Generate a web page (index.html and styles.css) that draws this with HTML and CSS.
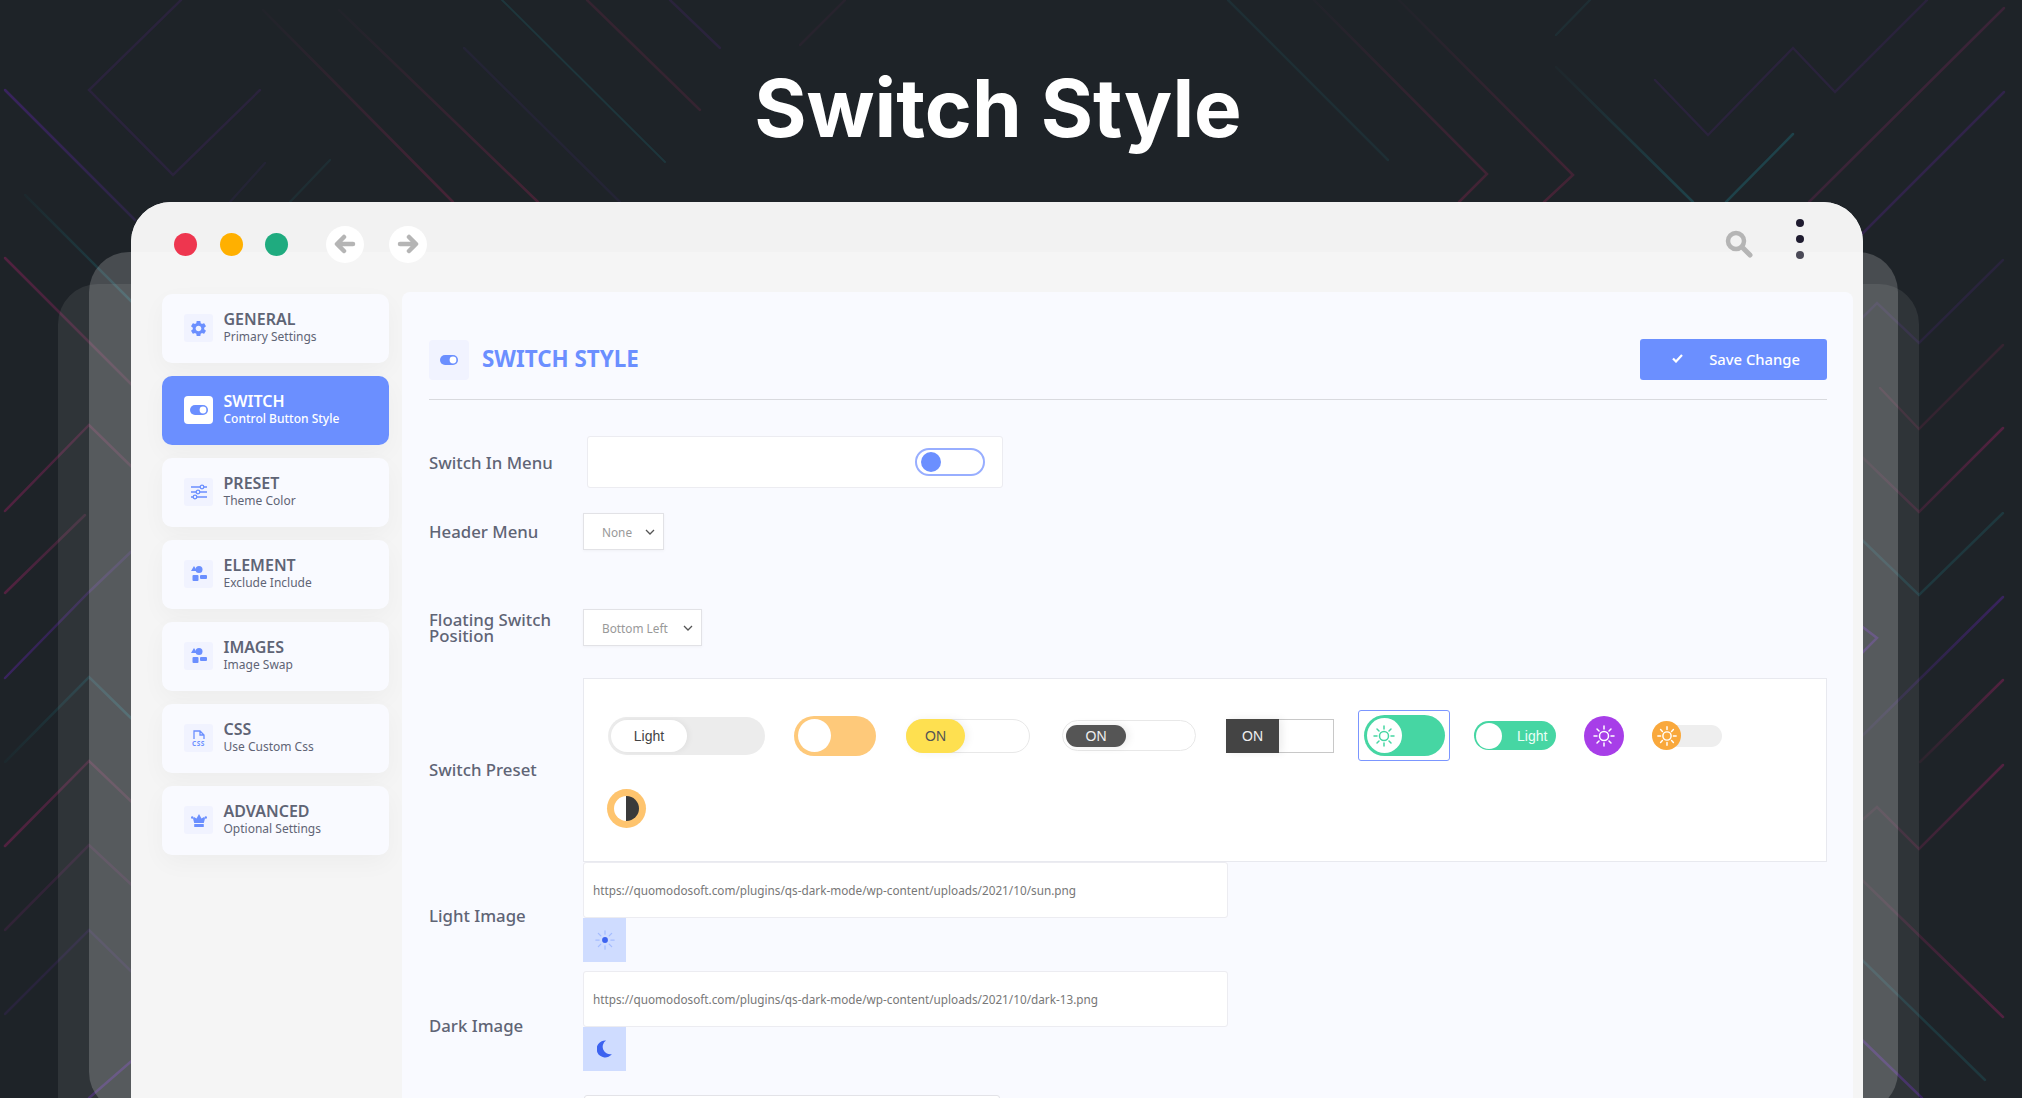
FILE: index.html
```html
<!DOCTYPE html>
<html lang="en">
<head>
  <meta charset="UTF-8" />
  <title>Switch Style</title>
  <link rel="stylesheet" href="styles.css">
</head>
<body>
  <div class="page">
    <!-- background line pattern -->
    <svg class="bg-lines" width="2022" height="1098" viewBox="0 0 2022 1098" fill="none" stroke-width="2.500" stroke-linecap="round" stroke-linejoin="miter">
      <defs>
        <linearGradient id="redL" x1="0" y1="0" x2="1" y2="0"><stop offset="0" stop-color="#5c2145"/><stop offset="1" stop-color="#3f2a3a"/></linearGradient>
        <linearGradient id="redR" x1="1" y1="0" x2="0" y2="0"><stop offset="0" stop-color="#5c2145"/><stop offset="1" stop-color="#2e252f"/></linearGradient>
        <linearGradient id="redT" x1="0" y1="1" x2="0" y2="0"><stop offset="0" stop-color="#4d2439"/><stop offset="1" stop-color="#22242b"/></linearGradient>
        <linearGradient id="purL" x1="0" y1="0" x2="1" y2="0"><stop offset="0" stop-color="#3e2468"/><stop offset="1" stop-color="#2e2648"/></linearGradient>
        <linearGradient id="purR" x1="1" y1="0" x2="0" y2="0"><stop offset="0" stop-color="#3e2468"/><stop offset="1" stop-color="#262538"/></linearGradient>
        <linearGradient id="tealL" x1="0" y1="0" x2="1" y2="0"><stop offset="0" stop-color="#1c2a2f"/><stop offset="1" stop-color="#1f4850"/></linearGradient>
        <linearGradient id="tealT" x1="0" y1="1" x2="0" y2="0"><stop offset="0" stop-color="#1f4850"/><stop offset="1" stop-color="#1e282d"/></linearGradient>
      </defs>
      <!-- top left -->
      <polyline points="5,90 135,220" stroke="url(#purL)" />
      <polyline points="181,0 89,90 173,175 260,90" stroke="#2d2340" />
      <polyline points="25,195 135,305" stroke="url(#tealL)" />
      <polyline points="5,258 135,388" stroke="url(#redL)" />
      <polyline points="263,10 453,202" stroke="url(#redT)" />
      <polyline points="339,10 538,202" stroke="url(#redT)" />
      <polyline points="502,0 665,162" stroke="#1e3a40" stroke-width="2" />
      <polyline points="464,48 620,202" stroke="#262538" />
      <polyline points="587,0 700,110" stroke="#3a2533" />
      <polyline points="670,0 720,48" stroke="#2d2340" />
      <polyline points="265,163 230,202" stroke="#262538" />
      <polyline points="330,160 290,202" stroke="#1e3036" />
      <polyline points="800,45 845,0" stroke="#2a2430" />
      <polyline points="1228,0 1388,160" stroke="#1f3238" />
      <!-- top right -->
      <polyline points="1314,0 1487,174 1459,202" stroke="url(#redT)" />
      <polyline points="1399,0 1573,175 1544,202" stroke="url(#redT)" />
      <polyline points="1590,0 1556,35" stroke="#1e3036" />
      <polyline points="1556,67 1693,202" stroke="url(#tealT)" />
      <polyline points="1793,134 1726,202" stroke="#1f4850" />
      <polyline points="1655,80 1708,135 1793,48 1835,92 1927,0" stroke="#2d2340" />
      <polyline points="2004,8 1809,202" stroke="#40253b" />
      <polyline points="2004,92 1860,236" stroke="#352350" />
      <!-- left edge -->
      <polyline points="5,511 89,425 135,470" stroke="url(#redL)" />
      <polyline points="5,593 85,515" stroke="url(#redL)" />
      <polyline points="5,678 89,592 135,548" stroke="url(#purL)" />
      <polyline points="5,762 89,677 135,722" stroke="url(#tealL)" />
      <polyline points="5,846 89,761 135,805" stroke="url(#redL)" />
      <polyline points="5,930 89,845 135,888" stroke="#35243a" />
      <polyline points="5,1014 89,930 135,975" stroke="#2b2540" />
      <polyline points="89,1098 135,1058" stroke="#3e2468" />
      <!-- right edge -->
      <polyline points="2003,260 1919,343 1877,303 1860,320" stroke="#2b2540" />
      <polyline points="2003,345 1919,429 1880,388" stroke="#3a2533" />
      <polyline points="2003,428 1919,512 1860,455" stroke="url(#redR)" />
      <polyline points="2003,513 1919,595 1860,538" stroke="#1f3c42" />
      <polyline points="2003,597 1860,738" stroke="url(#purR)" />
      <polyline points="1860,625 1877,638 1860,655" stroke="#3e2468" />
      <polyline points="2003,680 1920,762" stroke="url(#redR)" />
      <polyline points="2003,765 1919,849 1877,807 1860,822" stroke="url(#redR)" />
      <polyline points="2003,1017 1860,878" stroke="url(#redR)" />
      <polyline points="1860,958 1985,1080" stroke="#1f3c42" />
      <polyline points="1860,1038 1922,1098" stroke="#3e2468" />
    </svg>

    <h1 class="page-title">Switch Style</h1>

    <div class="layer layer-back"></div>
    <div class="layer layer-mid"></div>

    <div class="window">
      <div class="window-bar">
        <span class="light light-red"></span>
        <span class="light light-orange"></span>
        <span class="light light-green"></span>
        <span class="nav-btn nav-back">
          <svg width="22" height="20" viewBox="0 0 22 20" fill="none" stroke="#b5b5b5" stroke-width="4.500" stroke-linecap="round" stroke-linejoin="round"><path d="M19 10H4M10 3l-7 7 7 7"/></svg>
        </span>
        <span class="nav-btn">
          <svg width="22" height="20" viewBox="0 0 22 20" fill="none" stroke="#b5b5b5" stroke-width="4.500" stroke-linecap="round" stroke-linejoin="round"><path d="M3 10h15M12 3l7 7-7 7"/></svg>
        </span>
        <svg class="search-icon" width="28" height="28" viewBox="0 0 28 28" fill="none" stroke="#b5b5b5" stroke-linecap="round"><circle cx="11" cy="11" r="8" stroke-width="4.500"/><path d="M17 17l8 8" stroke-width="5"/></svg>
        <span class="dots"><i></i><i></i><i class="dot-soft"></i></span>
      </div>

      <div class="window-body">
        <nav class="side-nav">
          <a class="nav-item">
            <span class="nav-icon">
              <svg width="19" height="19" viewBox="0 0 24 24" fill="#6b8fff"><path d="M19.14 12.94c.04-.3.06-.61.06-.94 0-.32-.02-.64-.07-.94l2.03-1.58c.18-.14.23-.41.12-.61l-1.92-3.32c-.12-.22-.37-.29-.59-.22l-2.39.96c-.5-.38-1.03-.7-1.62-.94l-.36-2.54c-.04-.24-.24-.41-.48-.41h-3.84c-.24 0-.43.17-.47.41l-.36 2.54c-.59.24-1.13.57-1.62.94l-2.39-.96c-.22-.08-.47 0-.59.22L2.74 8.87c-.12.21-.08.47.12.61l2.03 1.58c-.05.3-.09.63-.09.94s.02.64.07.94l-2.03 1.58c-.18.14-.23.41-.12.61l1.92 3.32c.12.22.37.29.59.22l2.39-.96c.5.38 1.03.7 1.62.94l.36 2.54c.05.24.24.41.48.41h3.84c.24 0 .44-.17.47-.41l.36-2.54c.59-.24 1.13-.56 1.62-.94l2.39.96c.22.08.47 0 .59-.22l1.92-3.32c.12-.22.07-.47-.12-.61l-2.01-1.58zM12 15.6c-1.98 0-3.6-1.62-3.6-3.6s1.62-3.6 3.6-3.6 3.6 1.62 3.6 3.6-1.62 3.6-3.6 3.6z"/></svg>
            </span>
            <span class="nav-text"><b>GENERAL</b><small>Primary Settings</small></span>
          </a>
          <a class="nav-item nav-item-active">
            <span class="nav-icon">
              <svg width="18" height="10" viewBox="0 0 18 10"><rect width="18" height="10" rx="5" fill="#6b8fff"/><circle cx="13" cy="5" r="3.400" fill="#fff"/></svg>
            </span>
            <span class="nav-text"><b>SWITCH</b><small>Control Button Style</small></span>
          </a>
          <a class="nav-item">
            <span class="nav-icon">
              <svg width="16" height="16" viewBox="0 0 16 16" fill="#f4f6ff" stroke="#6b8fff" stroke-width="1.300"><path d="M0 3h16M0 8h16M0 13h16"/><circle cx="11" cy="3" r="1.800"/><circle cx="7" cy="8" r="1.800"/><circle cx="4" cy="13" r="1.800"/></svg>
            </span>
            <span class="nav-text"><b>PRESET</b><small>Theme Color</small></span>
          </a>
          <a class="nav-item">
            <span class="nav-icon">
              <svg width="16" height="16" viewBox="0 0 16 16" fill="#6b8fff"><path d="M3 0l3 5H0z"/><circle cx="8" cy="3.500" r="3.500"/><rect x="1.500" y="9" width="6" height="6" rx="1"/><rect x="9" y="9" width="7" height="4" rx="1"/></svg>
            </span>
            <span class="nav-text"><b>ELEMENT</b><small>Exclude Include</small></span>
          </a>
          <a class="nav-item">
            <span class="nav-icon">
              <svg width="16" height="16" viewBox="0 0 16 16" fill="#6b8fff"><path d="M3 0l3 5H0z"/><circle cx="8" cy="3.500" r="3.500"/><rect x="1.500" y="9" width="6" height="6" rx="1"/><rect x="9" y="9" width="7" height="4" rx="1"/></svg>
            </span>
            <span class="nav-text"><b>IMAGES</b><small>Image Swap</small></span>
          </a>
          <a class="nav-item">
            <span class="nav-icon nav-icon-css">
              <svg width="12" height="10" viewBox="0 0 12 10" fill="none" stroke="#6b8fff" stroke-width="1.300"><path d="M1 9V1h6l4 4v4M7 1v4h4"/></svg>
              <em>CSS</em>
            </span>
            <span class="nav-text"><b>CSS</b><small>Use Custom Css</small></span>
          </a>
          <a class="nav-item">
            <span class="nav-icon">
              <svg width="16" height="13" viewBox="0 0 16 13" fill="#6b8fff"><path d="M8 0l2.500 4.500L13 3l1 1.500L12.800 9H3.200L2 4.500 3 3l2.500 1.500z"/><circle cx="1.200" cy="3.500" r="1.200"/><circle cx="14.800" cy="3.500" r="1.200"/><rect x="3.200" y="10" width="9.600" height="3" rx=".5"/></svg>
            </span>
            <span class="nav-text"><b>ADVANCED</b><small>Optional Settings</small></span>
          </a>
        </nav>

        <main class="panel">
          <header class="panel-head">
            <span class="panel-icon">
              <svg width="18" height="10" viewBox="0 0 18 10"><rect width="18" height="10" rx="5" fill="#6b8fff"/><circle cx="13" cy="5" r="3.400" fill="#fff"/></svg>
            </span>
            <h2>SWITCH STYLE</h2>
            <button class="save-btn" type="button">
              <svg width="11" height="9" viewBox="0 0 11 9" fill="none" stroke="#fff" stroke-width="2.200"><path d="M1 4.500l3 3 6-6.500"/></svg>
              Save Change
            </button>
          </header>

          <div class="row row-menu">
            <label>Switch In Menu</label>
            <div class="toggle-box"><span class="toggle"><i></i></span></div>
          </div>

          <div class="row row-header">
            <label>Header Menu</label>
            <div class="select select-none">None
              <svg width="10" height="6" viewBox="0 0 10 6" fill="none" stroke="#555" stroke-width="1.300"><path d="M1 1l4 4 4-4"/></svg>
            </div>
          </div>

          <div class="row row-floating">
            <label>Floating Switch Position</label>
            <div class="select select-pos">Bottom Left
              <svg width="10" height="6" viewBox="0 0 10 6" fill="none" stroke="#555" stroke-width="1.300"><path d="M1 1l4 4 4-4"/></svg>
            </div>
          </div>

          <div class="row row-preset">
            <label>Switch Preset</label>
            <div class="preset-box">
              <span class="sw sw-light"><i>Light</i></span>
              <span class="sw sw-orange"><i></i></span>
              <span class="sw sw-yellow"><i>ON</i></span>
              <span class="sw sw-dark"><i>ON</i></span>
              <span class="sw sw-square"><i>ON</i></span>
              <span class="sw-frame">
                <span class="sw sw-green"><i>
                  <svg width="24" height="24" viewBox="0 0 24 24" fill="none" stroke="#46d6a3" stroke-width="1.500" stroke-linecap="round"><circle cx="12" cy="12" r="4.500"/><path d="M12 2v3M12 19v3M2 12h3M19 12h3M5 5l2 2M17 17l2 2M19 5l-2 2M7 17l-2 2"/></svg>
                </i></span>
              </span>
              <span class="sw sw-green-small"><i></i>Light</span>
              <span class="sw sw-purple">
                <svg width="24" height="24" viewBox="0 0 24 24" fill="none" stroke="#fff" stroke-width="1.500" stroke-linecap="round"><circle cx="12" cy="12" r="4.500"/><path d="M12 2v3M12 19v3M2 12h3M19 12h3M5 5l2 2M17 17l2 2M19 5l-2 2M7 17l-2 2"/></svg>
              </span>
              <span class="sw sw-sun"><i>
                <svg width="22" height="22" viewBox="0 0 24 24" fill="none" stroke="#fff" stroke-width="1.600" stroke-linecap="round"><circle cx="12" cy="12" r="4.500"/><path d="M12 2v3M12 19v3M2 12h3M19 12h3M5 5l2 2M17 17l2 2M19 5l-2 2M7 17l-2 2"/></svg>
              </i></span>
              <span class="sw sw-half"><i></i></span>
            </div>
          </div>

          <div class="row row-image">
            <label>Light Image</label>
            <div class="image-field">
              <div class="url-input">https://quomodosoft.com/plugins/qs-dark-mode/wp-content/uploads/2021/10/sun.png</div>
              <div class="image-preview">
                <svg width="20" height="20" viewBox="0 0 24 24" fill="none" stroke="#a5bcff" stroke-width="1.500" stroke-linecap="round"><circle cx="12" cy="12" r="3.500" fill="#3d63f0" stroke="none"/><path d="M12 1v4M12 19v4M1 12h4M19 12h4M4 4l3 3M17 17l3 3M20 4l-3 3M7 17l-3 3"/></svg>
              </div>
            </div>
          </div>

          <div class="row row-image row-image-dark">
            <label>Dark Image</label>
            <div class="image-field">
              <div class="url-input">https://quomodosoft.com/plugins/qs-dark-mode/wp-content/uploads/2021/10/dark-13.png</div>
              <div class="image-preview">
                <svg width="16" height="18" viewBox="0 0 16 18" fill="#3d63f0"><path d="M9 0.500A8.500 8.500 0 1 0 15 14 7.500 7.500 0 0 1 9 0.500z"/></svg>
              </div>
            </div>
          </div>

          <div class="row row-next">
            <label></label>
            <div class="next-input"></div>
          </div>
        </main>
      </div>
    </div>
  </div>
</body>
</html>
```

FILE: styles.css
```css
body {
  margin: 0;
  font-family: "Noto Sans", "Open Sans", sans-serif;
  color: #5f6475;
}
.page {
  position: relative;
  width: 2022px;
  height: 1098px;
  overflow: hidden;
  background-color: #1e2328;
}
.bg-lines {
  position: absolute;
  left: 0;
  top: 0;
  opacity: 0.85;
}
.page-title {
  position: relative;
  margin: 0;
  height: 202px;
  box-sizing: border-box;
  display: flex;
  justify-content: center;
  align-items: center;
  padding: 12px 26px 0 0;
  font-family: Inter, sans-serif;
  font-weight: 700;
  font-size: 80px;
  color: #fff;
}
.layer {
  position: absolute;
  border-radius: 40px;
}
.layer-back {
  left: 58px;
  right: 103px;
  top: 284px;
  height: 900px;
  background: rgba(255,255,255,0.08);
}
.layer-mid {
  left: 89px;
  right: 124px;
  top: 252px;
  height: 860px;
  background: rgba(255,255,255,0.19);
}

/* window */
.window {
  position: relative;
  margin-left: 131px;
  width: 1732px;
  height: 896px;
  border-radius: 40px 40px 0 0;
  background-color: #f5f5f5;
  overflow: hidden;
}
.window-bar {
  height: 74px;
  box-sizing: border-box;
  padding: 10px 59px 0 43px;
  display: flex;
  align-items: center;
  background: linear-gradient(#f2f2f2 50px, #f5f5f5 50px);
}
.light {
  width: 23px;
  height: 23px;
  border-radius: 50%;
  margin-right: 22.500px;
}
.light-red { background-color: #ee364f; }
.light-orange { background-color: #ffb000; }
.light-green { background-color: #1fab7f; }
.nav-btn {
  width: 38px;
  height: 37px;
  border-radius: 50%;
  background-color: #fff;
  display: flex;
  align-items: center;
  justify-content: center;
  margin-right: 25px;
}
.nav-back {
  margin-left: 15px;
}
.search-icon {
  margin-left: auto;
  margin-right: 43px;
}
.dots {
  display: flex;
  flex-direction: column;
  gap: 8px;
  margin-top: -10px;
}
.dots i {
  width: 8px;
  height: 8px;
  border-radius: 50%;
  background-color: #1f1c30;
}
.dots .dot-soft {
  background-color: #4b4a57;
}
.window-body {
  display: flex;
  gap: 13px;
  padding: 16px 10px 0 31px;
}

/* side nav */
.side-nav {
  width: 227px;
  flex-shrink: 0;
  margin-top: 2px;
  display: flex;
  flex-direction: column;
  gap: 13.500px;
}
.nav-item {
  height: 68.500px;
  box-sizing: border-box;
  padding-left: 22px;
  display: flex;
  align-items: center;
  gap: 10.500px;
  border-radius: 10px;
  background-color: #f9faff;
  box-shadow: 0 8px 24px rgba(0,0,0,0.035);
}
.nav-icon {
  width: 29px;
  height: 28px;
  border-radius: 3px;
  background-color: #f1f3ff;
  display: flex;
  align-items: center;
  justify-content: center;
}
.nav-icon-css {
  flex-direction: column;
  gap: 0;
}
.nav-icon-css em {
  font-style: normal;
  font-size: 6.500px;
  line-height: 7px;
  font-weight: 700;
  letter-spacing: 0.500px;
  color: #6b8fff;
}
.nav-text {
  display: flex;
  flex-direction: column;
  gap: 1px;
  margin-top: -2px;
}
.nav-text b {
  font-size: 16px;
  line-height: 18px;
  font-weight: 600;
}
.nav-text small {
  font-size: 12px;
  line-height: 15px;
}
.nav-item-active {
  background-color: #6b8fff;
  color: #fff;
}
.nav-item-active .nav-icon {
  background-color: #fff;
  border-radius: 4px;
}
.nav-item-active small {
  font-weight: 500;
}

/* panel */
.panel {
  flex: 1;
  height: 900px;
  box-sizing: border-box;
  padding: 47px 26px 0 27px;
  border-radius: 8px;
  background-color: #f9faff;
}
.panel-head {
  display: flex;
  align-items: center;
  padding-bottom: 19px;
  border-bottom: 1px solid #d9dade;
  margin-bottom: 36px;
}
.panel-icon {
  width: 40px;
  height: 40px;
  border-radius: 4px;
  background-color: #f1f3ff;
  display: flex;
  align-items: center;
  justify-content: center;
  margin-right: 13px;
}
.panel-head h2 {
  margin: -2px 0 0;
  font-size: 22.400px;
  font-weight: 700;
  color: #6b8fff;
}
.save-btn {
  margin-left: auto;
  width: 187px;
  height: 41px;
  border: none;
  border-radius: 3px;
  background-color: #6b8fff;
  color: #fff;
  font-family: inherit;
  font-size: 14.800px;
  font-weight: 500;
  display: flex;
  align-items: center;
  justify-content: flex-end;
  gap: 26px;
  padding: 0 27px 2px 0;
}
.row {
  display: flex;
  align-items: center;
}
.row label {
  width: 154px;
  flex-shrink: 0;
  font-size: 16.800px;
  line-height: 16px;
  font-weight: 500;
}
.row-menu label {
  padding-top: 2px;
}
.toggle-box {
  margin-left: 4px;
  width: 416px;
  height: 52px;
  box-sizing: border-box;
  background-color: #fff;
  border: 1px solid #ececf1;
  border-radius: 3px;
  display: flex;
  justify-content: flex-end;
  align-items: center;
  padding: 0 17px 0 0;
}
.toggle {
  width: 70px;
  height: 28px;
  box-sizing: border-box;
  border: 2px solid #98aeff;
  border-radius: 14px;
  display: flex;
  align-items: center;
  padding-left: 4px;
}
.toggle i {
  width: 20px;
  height: 20px;
  border-radius: 50%;
  background-color: #6b8fff;
}
.select {
  height: 37px;
  box-sizing: border-box;
  background-color: #fff;
  border: 1px solid #e2e2e6;
  box-shadow: 0 1px 3px rgba(0,0,0,0.04);
  padding: 0 8px 0 18px;
  display: flex;
  align-items: center;
  justify-content: space-between;
  font-size: 11.800px;
  color: #999;
}
.select-none { width: 81px; }
.select-pos { width: 119px; }
.row-header { margin-top: 25px; }
.row-floating { margin-top: 59px; }
.row-preset { margin-top: 32px; }

/* preset switches */
.preset-box {
  flex: 1;
  box-sizing: border-box;
  height: 184px;
  background-color: #fff;
  border: 1px solid #e8e9ef;
  padding: 31px 100px 0 23px;
  display: flex;
  flex-wrap: wrap;
  align-items: center;
  align-content: flex-start;
  row-gap: 28px;
  font-family: "Liberation Sans", Arial, sans-serif;
}
.sw {
  display: flex;
  align-items: center;
  box-sizing: border-box;
  flex-shrink: 0;
}
.sw i {
  font-style: normal;
  display: flex;
  align-items: center;
  justify-content: center;
}
.sw-light {
  width: 157px;
  height: 38px;
  margin-left: 1px;
  border-radius: 19px;
  background-color: #ececec;
  padding-left: 3px;
}
.sw-light i {
  width: 76px;
  height: 32px;
  border-radius: 16px;
  background-color: #fff;
  font-size: 14px;
  color: #444;
  box-shadow: 2px 0 6px rgba(0,0,0,0.05);
}
.sw-orange {
  width: 82px;
  height: 40px;
  margin-left: 29px;
  border-radius: 20px;
  background-color: #fec97a;
  padding-left: 4px;
}
.sw-orange i {
  width: 33px;
  height: 33px;
  border-radius: 50%;
  background-color: #fff;
}
.sw-yellow {
  width: 124px;
  height: 34px;
  margin-left: 30px;
  border-radius: 17px;
  border: 1px solid #e8e8e8;
}
.sw-yellow i {
  width: 59px;
  height: 34px;
  margin-left: -1px;
  border-radius: 17px;
  background-color: #fee050;
  font-size: 14px;
  color: #555;
  box-shadow: 3px 0 8px rgba(0,0,0,0.06);
}
.sw-dark {
  width: 134px;
  height: 31px;
  margin-left: 32px;
  border-radius: 16px;
  border: 1px solid #e8e8e8;
  padding-left: 3px;
}
.sw-dark i {
  width: 60px;
  height: 22px;
  border-radius: 11px;
  background-color: #555;
  font-size: 14px;
  color: #eee;
  box-shadow: 3px 0 8px rgba(0,0,0,0.08);
}
.sw-square {
  width: 108px;
  height: 34px;
  margin-left: 30px;
  border: 1px solid #c8c8c8;
  border-left: none;
}
.sw-square i {
  width: 53px;
  height: 34px;
  background-color: #444;
  font-size: 14px;
  color: #eee;
  box-shadow: 3px 0 8px rgba(0,0,0,0.08);
}
.sw-frame {
  width: 92px;
  height: 51px;
  margin-left: 24px;
  box-sizing: border-box;
  border: 1.500px solid #7b96ff;
  border-radius: 3px;
  display: flex;
  align-items: center;
  justify-content: center;
  flex-shrink: 0;
}
.sw-green {
  width: 81px;
  height: 41px;
  border-radius: 21px;
  background-color: #46d6a3;
  padding-left: 3px;
}
.sw-green i {
  width: 35px;
  height: 35px;
  border-radius: 50%;
  background-color: #fff;
}
.sw-green-small {
  width: 82px;
  height: 29px;
  margin-left: 24px;
  border-radius: 15px;
  background-color: #46d6a3;
  padding-left: 2px;
  font-size: 14px;
  color: #eafff6;
}
.sw-green-small i {
  width: 26px;
  height: 26px;
  margin-right: 15px;
  border-radius: 50%;
  background-color: #fff;
}
.sw-purple {
  width: 40px;
  height: 40px;
  margin-left: 28px;
  border-radius: 50%;
  background-color: #a73ee8;
  justify-content: center;
}
.sw-sun {
  width: 70px;
  height: 22px;
  margin-left: 28px;
  border-radius: 11px;
  background-color: #eeeeee;
}
.sw-sun i {
  width: 29px;
  height: 29px;
  border-radius: 50%;
  background-color: #f9a83c;
}
.sw-half {
  width: 39px;
  height: 39px;
  border-radius: 50%;
  background-color: #fec46e;
  justify-content: center;
}
.sw-half i {
  width: 25px;
  height: 25px;
  border-radius: 50%;
  background: linear-gradient(90deg, #fff 50%, #3a3a3a 50%);
}

/* image fields */
.row-image label {
  padding-top: 8px;
}
.row-image-dark {
  margin-top: 9px;
}
.row-image-dark label {
  padding-top: 10px;
}
.image-field {
  display: flex;
  flex-direction: column;
}
.url-input {
  width: 645px;
  height: 56px;
  box-sizing: border-box;
  padding-left: 9px;
  display: flex;
  align-items: center;
  background-color: #fff;
  border: 1px solid #ececf1;
  border-radius: 3px;
  font-size: 11.750px;
  color: #777;
}
.image-preview {
  width: 43px;
  height: 44px;
  background-color: #cfdcff;
  display: flex;
  align-items: center;
  justify-content: center;
}
.row-next {
  margin-top: 24px;
}
.next-input {
  width: 414px;
  height: 40px;
  margin-left: 1px;
  background-color: #fff;
  border: 1px solid #e3e3e8;
  border-radius: 3px;
}
```
